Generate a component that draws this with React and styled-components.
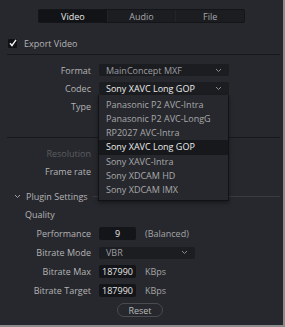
import React from 'react'
import styled, { createGlobalStyle } from 'styled-components'

const GlobalStyle = createGlobalStyle`
  * { box-sizing: border-box; }
  body {
    margin: 0;
    background: #8c8c8c;
    font-family: "Open Sans", "Noto Sans", sans-serif;
  }
`

const colors = {
  panel: '#27282d',
  field: '#1c1d21',
  fieldDark: '#141518',
  text: '#b4b4b6',
  textDim: '#5c5d61',
  line: '#17181b',
}

const Panel = styled.div`
  position: relative;
  width: 283px;
  height: 325px;
  background: ${colors.panel};
  font-size: 9px;
  color: ${colors.text};
  padding-top: 9px;
`

const Tabs = styled.div`
  display: flex;
  width: 207px;
  height: 14px;
  margin: 0 auto;
  background: ${colors.field};
  border: 1px solid #141518;
  border-radius: 2px;
`

const Tab = styled.div`
  flex: 1;
  display: flex;
  align-items: center;
  justify-content: center;
  background: ${(p) => (p.active ? '#121316' : 'transparent')};
  color: ${(p) => (p.active ? '#e8e8e8' : '#a6a7aa')};
  border-left: ${(p) => (p.first ? 'none' : '1px solid #23242a')};
`

const CheckRow = styled.div`
  display: flex;
  align-items: center;
  gap: 7px;
  height: 12px;
  margin: 14px 0 0 8px;
`

const Checkbox = styled.div`
  width: 9px;
  height: 9px;
  background: #101114;
  border-radius: 1px;
  display: flex;
  align-items: center;
  justify-content: center;
`

const Divider = styled.div`
  height: 1px;
  background: ${colors.line};
  margin: ${(p) => p.m};
`

const Row = styled.div`
  display: flex;
  align-items: center;
  height: ${(p) => p.h || 18}px;
`

const Label = styled.div`
  width: 92px;
  text-align: right;
  padding-right: 1px;
  color: ${(p) => (p.dim ? colors.textDim : colors.text)};
  flex-shrink: 0;
`

const Select = styled.div`
  position: relative;
  display: flex;
  align-items: center;
  justify-content: space-between;
  margin-left: 7px;
  width: ${(p) => p.w}px;
  height: ${(p) => p.hh || 13}px;
  padding: 0 7px;
  background: ${colors.field};
  border-radius: 2px;
  color: ${(p) => (p.bright ? '#ececec' : '#9d9ea1')};
`

const Chevron = () => (
  <svg width="7" height="5" viewBox="0 0 7 5">
    <path d="M1 1 L3.5 3.5 L6 1" fill="none" stroke="#8a8b8e" strokeWidth="1" />
  </svg>
)

const Menu = styled.div`
  position: absolute;
  top: 13px;
  left: -1px;
  width: 131px;
  padding: 3px 0 2px;
  background: ${colors.panel};
  border: 1px solid #111215;
  border-top: none;
  box-shadow: 0 2px 4px rgba(0, 0, 0, 0.4);
  z-index: 2;
`

const MenuItem = styled.div`
  height: 14.3px;
  line-height: 14.3px;
  padding-left: 7px;
  color: ${(p) => (p.active ? '#ececec' : '#a7a8ab')};
  background: ${(p) => (p.active ? '#17181b' : 'transparent')};
`

const Section = styled.div`
  display: flex;
  align-items: center;
  height: 14px;
  margin: 9px 0 0 14px;
  gap: 5px;
`

const SectionLine = styled.div`
  flex: 1;
  height: 1px;
  background: #3a3b40;
  margin-right: 3px;
`

const SubHead = styled.div`
  margin: 5px 0 0 25px;
  height: 14px;
  line-height: 14px;
`

const Input = styled.div`
  margin-left: 7px;
  width: 37px;
  height: 13px;
  background: ${colors.fieldDark};
  border-radius: 2px;
  color: #e6e6e6;
  display: flex;
  align-items: center;
  justify-content: center;
`

const Unit = styled.div`
  margin-left: 9px;
  color: #a3a4a7;
`

const ResetRow = styled.div`
  display: flex;
  justify-content: center;
  margin-top: 3px;
  padding-right: 3px;
`

const Button = styled.div`
  width: 46px;
  height: 14px;
  border: 1px solid #4a4b50;
  border-radius: 7px;
  display: flex;
  align-items: center;
  justify-content: center;
  color: #b8b9bc;
`

const codecs = [
  'Panasonic P2 AVC-Intra',
  'Panasonic P2 AVC-LongG',
  'RP2027 AVC-Intra',
  'Sony XAVC Long GOP',
  'Sony XAVC-Intra',
  'Sony XDCAM HD',
  'Sony XDCAM IMX',
]

export default function App() {
  return (
    <>
      <GlobalStyle />
      <Panel>
        <Tabs>
          <Tab active first>Video</Tab>
          <Tab>Audio</Tab>
          <Tab>File</Tab>
        </Tabs>
        <CheckRow>
          <Checkbox>
            <svg width="8" height="8" viewBox="0 0 8 8">
              <path d="M1 4.2 L3 6.5 L7 0.8" fill="none" stroke="#f2f2f2" strokeWidth="1.4" />
            </svg>
          </Checkbox>
          Export Video
        </CheckRow>
        <Divider m="5px 3px 6px 7px" />
        <Row>
          <Label>Format</Label>
          <Select w={130} hh={12}>
            MainConcept MXF
            <Chevron />
          </Select>
        </Row>
        <Row>
          <Label>Codec</Label>
          <Select w={130} bright>
            Sony XAVC Long GOP
            <Chevron />
            <Menu>
              {codecs.map((c) => (
                <MenuItem key={c} active={c === 'Sony XAVC Long GOP'}>
                  {c}
                </MenuItem>
              ))}
            </Menu>
          </Select>
        </Row>
        <Row>
          <Label>Type</Label>
        </Row>
        <Divider m="22px 3px 6px 7px" />
        <Row>
          <Label dim>Resolution</Label>
        </Row>
        <Row>
          <Label>Frame rate</Label>
        </Row>
        <Section>
          <svg width="7" height="5" viewBox="0 0 7 5">
            <path d="M1 1 L3.5 3.5 L6 1" fill="none" stroke="#a0a1a4" strokeWidth="1" />
          </svg>
          Plugin Settings
          <SectionLine />
        </Section>
        <SubHead>Quality</SubHead>
        <Row h={19} style={{ marginTop: 2 }}>
          <Label>Performance</Label>
          <Input>9</Input>
          <Unit>(Balanced)</Unit>
        </Row>
        <Row h={19}>
          <Label>Bitrate Mode</Label>
          <Select w={96} hh={12}>
            VBR
            <Chevron />
          </Select>
        </Row>
        <Row h={19}>
          <Label>Bitrate Max</Label>
          <Input>187990</Input>
          <Unit>KBps</Unit>
        </Row>
        <Row h={19}>
          <Label>Bitrate Target</Label>
          <Input>187990</Input>
          <Unit>KBps</Unit>
        </Row>
        <ResetRow>
          <Button>Reset</Button>
        </ResetRow>
      </Panel>
    </>
  )
}
